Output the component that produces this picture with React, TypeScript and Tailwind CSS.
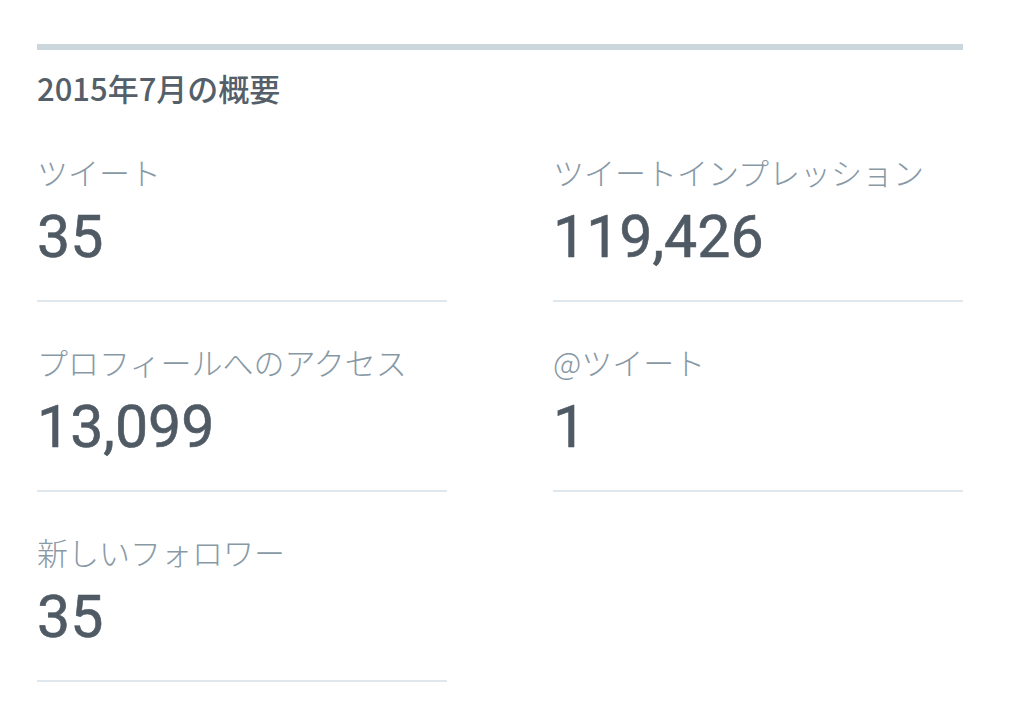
import React from "react"

const stats = [
    { label: "ツイート", value: "35" },
    { label: "ツイートインプレッション", value: "119,426" },
    { label: "プロフィールへのアクセス", value: "13,099" },
    { label: "@ツイート", value: "1" },
    { label: "新しいフォロワー", value: "35" },
]

export default function App() {
    return (
        <div className="min-h-[727px] bg-white pl-[37px] pt-[44px] font-['Noto_Sans_CJK_JP','Noto_Sans',sans-serif]">
            <div className="w-[926px]">
                <div className="h-[6px] bg-[#ccd6dd]" />
                <h2 className="h-[62px] pt-[18px] text-[31px] leading-[40px] font-medium text-[#555f69]">
                    2015年7月の概要
                </h2>

                {/* Summary grid */}
                <div className="grid grid-cols-2 gap-x-[106px]">
                    {stats.map((s, i) => (
                        <div key={i} className="border-b-2 border-[#e1e8ed] pt-[40px] pb-[31px]">
                            <div className="h-[40px] text-[31px] leading-[40px] font-light text-[#8899a6] whitespace-nowrap">
                                {s.label}
                            </div>
                            <div className="mt-[13px] h-[64px] font-['Roboto',sans-serif] text-[59px] leading-[64px] font-normal text-[#4f5a64] [-webkit-text-stroke:0.6px_#4f5a64]">
                                {s.value}
                            </div>
                        </div>
                    ))}
                </div>
            </div>
        </div>
    )
}
